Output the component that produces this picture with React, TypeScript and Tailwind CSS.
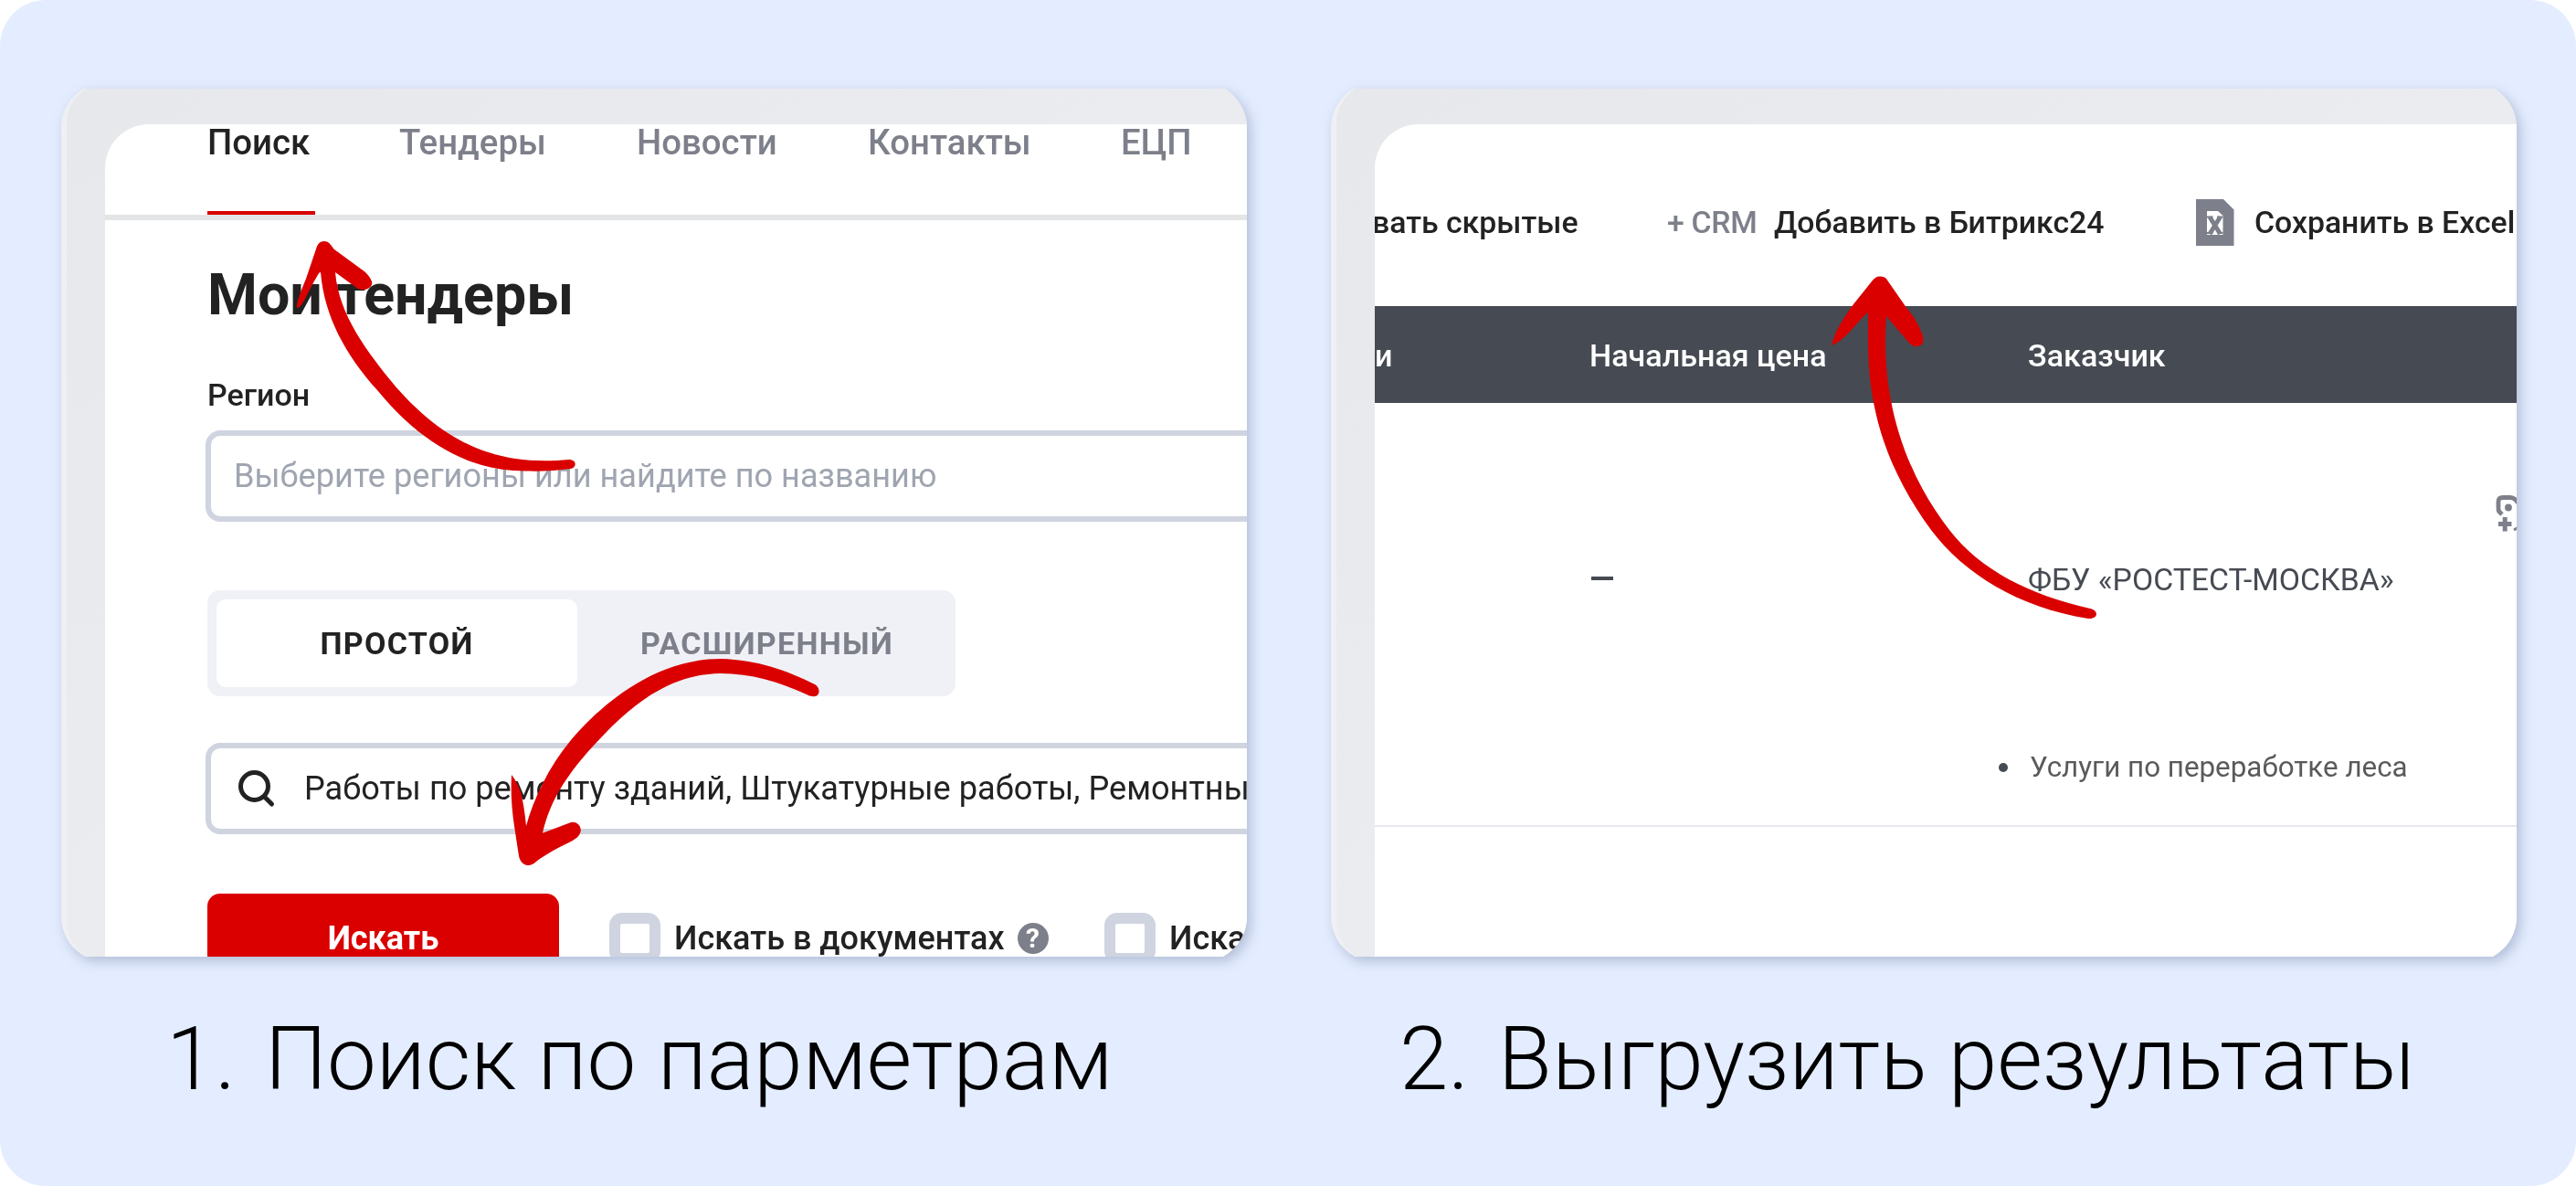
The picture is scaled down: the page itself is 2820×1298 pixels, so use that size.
import type { ReactNode } from 'react';

const NAV = [
  { label: 'Поиск', width: 'w-[210px]', active: true },
  { label: 'Тендеры', width: 'w-[260px]' },
  { label: 'Новости', width: 'w-[253px]' },
  { label: 'Контакты', width: 'w-[277px]' },
  { label: 'ЕЦП', width: 'w-[100px]' },
];

function Card({ children, arrows }: { children: ReactNode; arrows: ReactNode }) {
  return (
    <div className="drop-shadow-[4px_5px_7px_rgba(60,80,120,0.3)]">
      <div className="relative w-[1298px] h-[950px] overflow-hidden">
        <div className="w-[1298px] h-[963px] -mt-[7px] rounded-[50px] overflow-hidden bg-[#eff0f3] pl-[6px]">
          <div className="w-full h-full rounded-[45px] bg-linear-to-br from-[#e7e8eb] via-[#ebecf0] to-[#e7e8eb] pl-[42px] pt-[46px]">
            <div className="w-[1250px] h-[917px] rounded-tl-[48px] overflow-hidden bg-white">
              {children}
            </div>
          </div>
        </div>
        {arrows}
      </div>
    </div>
  );
}

function Arrows({ viewBox, paths }: { viewBox: string; paths: string[] }) {
  return (
    <svg className="absolute inset-0 w-full h-full" viewBox={viewBox} fill="#da0000">
      {paths.map(d => <path key={d} d={d} />)}
    </svg>
  );
}

function SearchIcon() {
  return (
    <svg className="w-[42px] h-[42px] shrink-0" viewBox="0 0 42 42" fill="none" stroke="#222" strokeWidth="5" strokeLinecap="round">
      <circle cx="18.500" cy="18.500" r="15" />
      <path d="M30 30.500 37.500 38" />
    </svg>
  );
}

function ExcelIcon() {
  return (
    <svg className="w-[42px] h-[52px] shrink-0" viewBox="0 0 42 52">
      <path d="M0 0H30L41.500 11.500V51H0Z" fill="#7d808a" />
      <path d="M12 13H24L29.500 18V39H12Z" fill="#fff" />
      <path d="M15 19.500 26.500 38M26.500 19.500 15 38" stroke="#7d808a" strokeWidth="5" />
      <path d="M12 19.500H18.500M23 19.500H29.500M12 37H18.500M23 37H29.500" stroke="#7d808a" strokeWidth="2.200" />
    </svg>
  );
}

function TagPlusIcon() {
  return (
    <svg className="w-[50px] h-[44px] shrink-0" viewBox="0 0 50 44">
      <path d="M8 22 4.500 18.500Q4 17 4 14V8.500Q4 3.500 9 3.500H17Q22 3.500 26 10" fill="none" stroke="#7d808a" strokeWidth="4.800" />
      <circle cx="15" cy="14.500" r="3.900" fill="#7d808a" />
      <path d="M4 32.500H18.500M11.200 25V40.500" stroke="#7d808a" strokeWidth="5" />
      <path d="M21 39 26 36" stroke="#7d808a" strokeWidth="3" />
    </svg>
  );
}

function Checkbox() {
  return <span className="block w-[56px] h-[56px] rounded-[14px] border-[12px] border-[#cfd4e0] bg-white shrink-0" />;
}

function SearchCard() {
  return (
    <Card
      arrows={
        <Arrows
          viewBox="67 97 1298 950"
          paths={[
            'M355 264C350 264 348 267 346.500 271L335 305C328 322 324 333 325 336.700C327 338 330 334 333 329C338 319 344 307 349.500 298.500L351 298C355 346 378 388 413 427C455 478 508 516 576 515.500C594 516 610 515 625 513C632 511 631 503 623 503C540 511 485 482 433 423C402 385 371 345 367 298L391 315.500C400 320 409 314 407 308C405 303 402 300 399.500 297.500L366 273C363 270 361 264 355 264Z',
            'M577 947C572 946 569 942 568 936.700L563.400 906.700C560 886 559 866 560 848C565 854 568 861 570.500 868C573 880 575 892 576 904C584 875 600 840 625 810C668 760 725 721 789 721C829 722 862 734 892 749C899 753 898 764 889 762C887 762 885 761 883 760C852 746 822 737 789 737C728 738 684 776 636 831.700C611 862 600 886 594 911.700L623 900.700C632 897 638 906 635 912C633 917 627 920 620 923.500C610 928 602 933 594 938C588 941 584 948 577 947Z',
          ]}
        />
      }
    >
      <nav className="flex h-[105px] pl-[112px] border-b-[6px] border-[#e4e5e7] text-[38.4px] leading-[40px] font-medium">
        {NAV.map(item => (
          <div key={item.label} className={`${item.width} flex flex-col justify-between items-start shrink-0`}>
            <span className={item.active ? 'text-[#222]' : 'text-[#7d808a]'}>{item.label}</span>
            {item.active && <span className="block w-[118px] h-[4px] bg-[#da0000]" />}
          </div>
        ))}
      </nav>
      <div className="pl-[112px] text-[#222]">
        <h2 className="mt-[50px] text-[62.7px] leading-[64px] font-bold">Мои тендеры</h2>
        <p className="mt-[57px] text-[34px] leading-[40px] font-medium">Регион</p>
        <div className="-ml-[2px] mt-[19px] w-[1300px] h-[100px] rounded-[16px] border-[6px] border-[#cfd4e0] pl-[25px] flex items-center text-[36.15px] text-[#9fa5b0] whitespace-nowrap">
          Выберите регионы или найдите по названию
        </div>
        <div className="mt-[75px] w-[819px] h-[116px] rounded-[14px] bg-[#f0f1f6] p-[10px] flex text-[34px] font-bold tracking-[1.3px]">
          <div className="w-[395px] rounded-[10px] bg-white flex items-center justify-center">ПРОСТОЙ</div>
          <div className="flex-1 pl-[11px] flex items-center justify-center text-[#7d808a]">РАСШИРЕННЫЙ</div>
        </div>
        <div className="-ml-[2px] mt-[51px] w-[1300px] h-[100px] rounded-[16px] border-[6px] border-[#cfd4df] pl-[29px] flex items-center gap-[31px] text-[36.15px] whitespace-nowrap">
          <SearchIcon />
          Работы по ремонту зданий, Штукатурные работы, Ремонтные работы
        </div>
        <div className="mt-[65px] h-[97px] w-[1300px] flex items-center text-[36px] font-medium whitespace-nowrap">
          <div className="w-[385px] h-full rounded-[14px] bg-[#da0000] text-white font-bold flex items-center justify-center">Искать</div>
          <div className="ml-[55px] w-[542px] flex items-center">
            <Checkbox />
            <span className="ml-[15px]">Искать в документах</span>
            <span className="ml-[14px] w-[34px] h-[34px] rounded-full bg-[#7d808a] text-white text-[30px] leading-[34px] font-bold text-center">?</span>
          </div>
          <Checkbox />
          <span className="ml-[15px]">Искать</span>
        </div>
      </div>
    </Card>
  );
}

function ResultsCard() {
  return (
    <Card
      arrows={
        <Arrows
          viewBox="1457 97 1298 950"
          paths={[
            'M2060 302.700C2055 302 2052 304 2049 308L2029 333C2019 347 2009 361 2005 378C2013 375 2019 369 2025 363C2032 355 2038 348 2045 341.700L2045 375C2045 455 2070 520 2114 580C2150 628 2210 665 2286 677C2297 678 2298 668 2288 666C2222 651 2168 624 2134 580C2090 523 2058 445 2065 346L2089.600 375C2095 381 2103 380 2105 375C2106 370 2105 366 2103 363C2100 354 2094 345 2087 336.700L2067 308C2065 304 2063 303 2060 302.700Z',
          ]}
        />
      }
    >
      <div className="h-[199px] w-[1400px] pt-[17px] flex items-center text-[33.8px] leading-[44px] font-medium text-[#222] whitespace-nowrap">
        <span className="w-[323px] -ml-[3px]">вать скрытые</span>
        <span className="w-[117px] text-[#7d808a] tracking-[-0.3px]">+ CRM</span>
        <span className="w-[462px]">Добавить в Битрикс24</span>
        <ExcelIcon />
        <span className="ml-[22px]">Сохранить в Excel</span>
      </div>
      <div className="h-[106px] bg-[#464a52] text-white text-[34.1px] leading-[44px] pt-[2px] font-medium flex items-center">
        <span className="w-[235px]">и</span>
        <span className="w-[480px]">Начальная цена</span>
        <span>Заказчик</span>
      </div>
      <div className="h-[464px] w-[1400px] border-b-2 border-[#e8eaf0] flex text-[33.8px] leading-[40px] text-[#464a52] whitespace-nowrap">
        <div className="w-[235px] shrink-0" />
        <div className="w-[480px] shrink-0 pt-[190px] pl-[2px]">
          <div className="w-[24px] h-[4px] bg-[#464a52]" />
        </div>
        <div className="w-[511px] shrink-0 pt-[174px]">
          <p>ФБУ «РОСТЕСТ-МОСКВА»</p>
          <div className="mt-[165px] -ml-[32px] flex items-center text-[31.35px]">
            <span className="w-[10px] h-[10px] rounded-full bg-[#464a52]" />
            <span className="ml-[24px] text-[#5a5a5a]">Услуги по переработке леса</span>
          </div>
        </div>
        <div className="pt-[100px]">
          <TagPlusIcon />
        </div>
      </div>
    </Card>
  );
}

export default function App() {
  return (
    <div className="w-[2820px] h-[1298px] bg-white font-[Roboto,sans-serif]">
      <div className="w-full h-full rounded-[50px] bg-[#e4edff] pt-[97px] pl-[67px]">
        <div className="flex gap-[92px]">
          <SearchCard />
          <ResultsCard />
        </div>
        <div className="flex mt-[56px] text-[96px] leading-[112px] font-light text-black whitespace-nowrap">
          <div className="w-[1350px] pl-[115px] flex">
            <span className="w-[108px]">1.</span>
            <span>Поиск по парметрам</span>
          </div>
          <div className="pl-[115px] flex">
            <span className="w-[108px]">2.</span>
            <span>Выгрузить результаты</span>
          </div>
        </div>
      </div>
    </div>
  );
}
